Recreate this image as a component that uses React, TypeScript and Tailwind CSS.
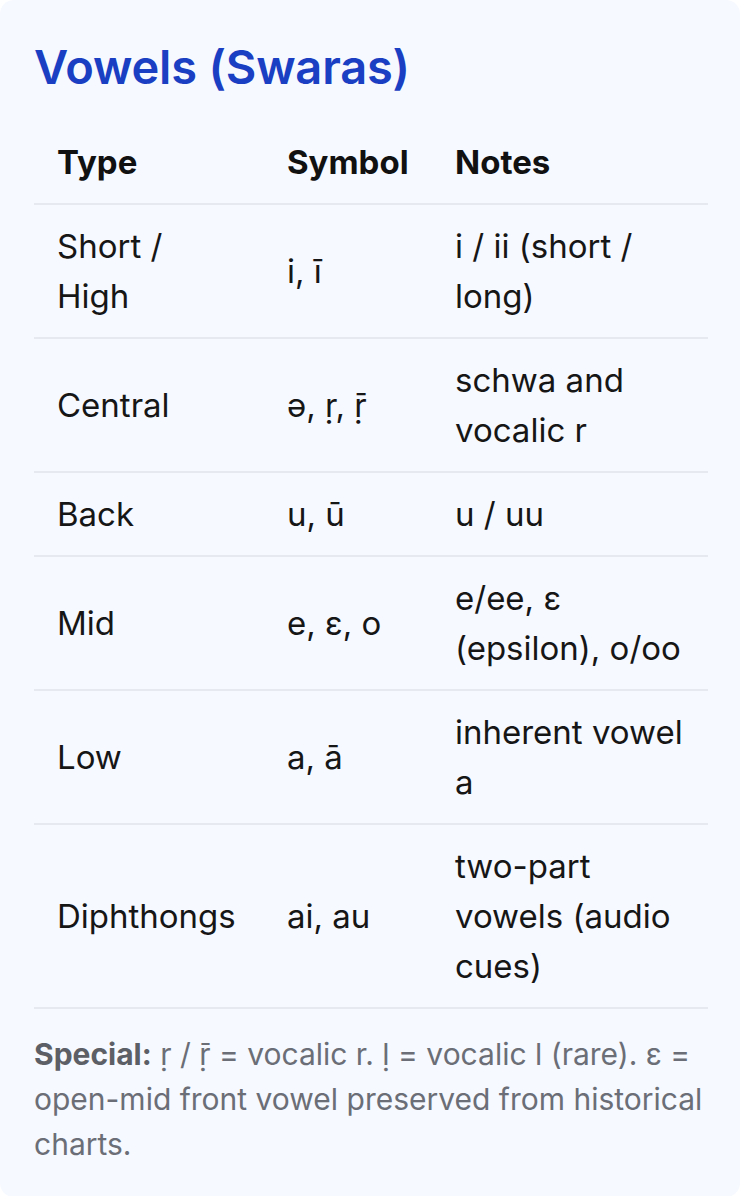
import React from "react";

const rows: { type: string; symbol: string; notes: string }[] = [
  { type: "Short / High", symbol: "i, ī", notes: "i / ii (short / long)" },
  { type: "Central", symbol: "ə, ṛ, ṝ", notes: "schwa and vocalic r" },
  { type: "Back", symbol: "u, ū", notes: "u / uu" },
  { type: "Mid", symbol: "e, ɛ, o", notes: "e/ee, ɛ (epsilon), o/oo" },
  { type: "Low", symbol: "a, ā", notes: "inherent vowel a" },
  { type: "Diphthongs", symbol: "ai, au", notes: "two-part vowels (audio cues)" },
];

export default function App() {
  return (
    <div
      className="w-[740px] min-h-[1196px] bg-white"
      style={{ fontFamily: "Inter, 'Noto Sans', sans-serif" }}
    >
      <div className="min-h-[1196px] rounded-[14px] bg-[#f6f9ff] pl-[34px] pr-[32px] pt-[39px] pb-[30px]">
        <h2 className="text-[47px] leading-[56px] font-semibold text-[#1a3fc2] tracking-[-0.2px]">
          Vowels (Swaras)
        </h2>
        <table className="mt-[26px] w-full table-fixed border-collapse">
          <colgroup>
            <col className="w-[230px]" />
            <col className="w-[168px]" />
            <col />
          </colgroup>
          <thead>
            <tr className="border-b-2 border-[#e6e9ef]">
              <th className="px-[23px] py-[16px] text-left align-middle text-[33px] leading-[50px] font-bold text-[#111111]">
                Type
              </th>
              <th className="px-[23px] py-[16px] text-left align-middle text-[33px] leading-[50px] font-bold text-[#111111]">
                Symbol
              </th>
              <th className="px-[23px] py-[16px] text-left align-middle text-[33px] leading-[50px] font-bold text-[#111111]">
                Notes
              </th>
            </tr>
          </thead>
          <tbody>
            {rows.map((r) => (
              <tr key={r.type} className="border-b-2 border-[#e6e9ef]">
                <td className="px-[23px] py-[16px] align-middle text-[33px] leading-[50px] text-[#161616]">
                  {r.type}
                </td>
                <td className="px-[23px] py-[16px] align-middle text-[33px] leading-[50px] text-[#161616]">
                  {r.symbol}
                </td>
                <td className="px-[23px] py-[16px] align-middle text-[33px] leading-[50px] text-[#161616]">
                  {r.notes}
                </td>
              </tr>
            ))}
          </tbody>
        </table>
        <p className="mt-[23px] text-[30px] leading-[45px] text-[#6b6e76]">
          <span className="font-bold text-[#5c5f66]">Special:</span> ṛ / ṝ = vocalic r. ḷ = vocalic l (rare). ɛ = open-mid front vowel preserved from historical charts.
        </p>
      </div>
    </div>
  );
}
